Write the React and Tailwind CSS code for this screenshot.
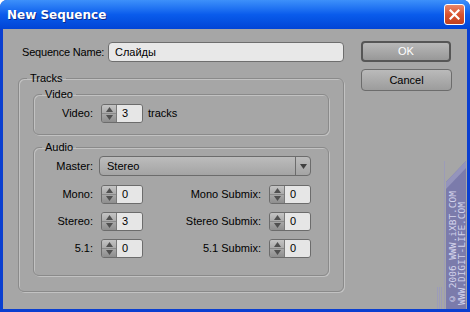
import React from 'react';

const etched = 'border border-[#8a8a8a] rounded-[6px] shadow-[inset_1px_1px_0_#c2c2c2,1px_1px_0_#c2c2c2]';

function Spinner({ value }) {
  return (
    <div className="flex w-[42px] h-[19px] rounded-[3px] border border-[#6c6c6c] overflow-hidden">
      <div className="w-[15px] flex flex-col bg-gradient-to-b from-[#c4c4c4] to-[#8e8e8e] border-r border-[#7a7a7a]">
        <div className="flex-1 flex items-end justify-center pb-[1px] border-b border-[#8a8a8a]">
          <svg width="7" height="5" viewBox="0 0 7 5"><path d="M3.5 0L7 5H0z" fill="#505050" /></svg>
        </div>
        <div className="flex-1 flex items-start justify-center pt-[1px]">
          <svg width="7" height="5" viewBox="0 0 7 5"><path d="M0 0h7L3.5 5z" fill="#505050" /></svg>
        </div>
      </div>
      <div className="flex-1 bg-[#e6e6e6] pl-[5px] flex items-center leading-none">{value}</div>
    </div>
  );
}

function Group({ title, className, children }) {
  return (
    <fieldset className={`${etched} ${className}`}>
      <legend className="ml-[8px] px-[3px] leading-[13px]">{title}</legend>
      {children}
    </fieldset>
  );
}

function Row({ label, value, label2, value2 }) {
  return (
    <div className="flex items-center h-[19px]">
      <span className="w-[59px] text-right">{label}</span>
      <div className="ml-[8px]"><Spinner value={value} /></div>
      <span className="flex-1 text-right whitespace-nowrap">{label2}</span>
      <div className="ml-[8px]"><Spinner value={value2} /></div>
    </div>
  );
}

export default function App() {
  return (
    <div className="w-[470px] h-[312px] flex flex-col bg-[#0a3fd0] rounded-t-[7px] overflow-hidden font-['Liberation_Sans',Arial,sans-serif] text-[11px] text-black">
      {/* title bar */}
      <div className="h-[29px] flex items-center pl-[7px] pr-[5px] bg-gradient-to-b from-[#3d90fa] via-[#0a5cec] to-[#0244d6]">
        <span className="font-['DejaVu_Sans',sans-serif] font-bold text-[12px] text-white [text-shadow:1px_1px_0_#0c2a8a]">New Sequence</span>
        <div className="ml-auto w-[21px] h-[21px] rounded-[3px] border border-white bg-gradient-to-b from-[#e8866a] via-[#d9532f] to-[#c1401e] flex items-center justify-center">
          <svg width="11" height="11" viewBox="0 0 11 11"><path d="M1.5 1.5l8 8M9.5 1.5l-8 8" stroke="#fff" strokeWidth="2.2" strokeLinecap="square" /></svg>
        </div>
      </div>

      {/* body */}
      <div className="relative flex-1 mx-[3px] mb-[3px] bg-[#a6a6a6] flex gap-[17px] px-[15px] pt-[13px]">
        <div className="w-[326px] shrink-0 flex flex-col">
          <div className="flex items-center h-[20px]">
            <span className="pl-[4px] whitespace-nowrap tracking-[-0.2px]">Sequence Name:</span>
            <div className="ml-auto w-[236px] h-[20px] rounded-[4px] border border-[#6e6e6e] bg-[#e8e8e8] pl-[6px] flex items-center">Слайды</div>
          </div>

          <Group title="Tracks" className="mt-[10px]">
            <div className="px-[14px] pt-[3px] pb-[15px]">
              <Group title="Video">
                <div className="flex items-center pt-[3px] pb-[11px] h-[33px]">
                  <span className="w-[59px] text-right">Video:</span>
                  <div className="ml-[8px]"><Spinner value="3" /></div>
                  <span className="ml-[5px]">tracks</span>
                </div>
              </Group>
              <Group title="Audio" className="mt-[6px]">
                <div className="pt-[2px] pb-[17px] pr-[17px] flex flex-col gap-[8px]">
                  <div className="flex items-center h-[20px] mb-[1px]">
                    <span className="w-[59px] text-right">Master:</span>
                    <div className="ml-[6px] flex-1 h-[20px] rounded-[4px] border border-[#6c6c6c] bg-gradient-to-b from-[#bcbcbc] to-[#a4a4a4] flex">
                      <span className="flex-1 pl-[7px] flex items-center">Stereo</span>
                      <div className="w-[15px] border-l border-[#6c6c6c] flex items-center justify-center">
                        <svg width="7" height="5" viewBox="0 0 7 5"><path d="M0 0h7L3.5 5z" fill="#404040" /></svg>
                      </div>
                    </div>
                  </div>
                  <Row label="Mono:" value="0" label2="Mono Submix:" value2="0" />
                  <Row label="Stereo:" value="3" label2="Stereo Submix:" value2="0" />
                  <Row label="5.1:" value="0" label2="5.1 Submix:" value2="0" />
                </div>
              </Group>
            </div>
          </Group>
        </div>

        <div className="w-[91px] shrink-0 flex flex-col">
          <button className="-mt-[1px] h-[21px] w-[90px] rounded-[4px] border-2 border-[#565656] bg-gradient-to-b from-[#b8b8b8] to-[#989898] text-white flex items-center justify-center">OK</button>
          <button className="mt-[7px] h-[22px] w-[91px] rounded-[4px] border border-[#6c6c6c] bg-gradient-to-b from-[#bababa] to-[#9c9c9c] flex items-center justify-center">Cancel</button>
        </div>

        {/* watermark */}
        <svg className="absolute right-0 bottom-0" width="30" height="148" viewBox="0 0 30 148">
          <path d="M9 21L29 0V148H9z" fill="#7b7bab" />
          <path d="M9 21L29 0V7L9 28z" fill="#9494bc" />
          <rect x="7" y="0" width="1" height="148" fill="#9c9cb8" />
          <rect x="0" y="126" width="1" height="22" fill="#9c9cb8" />
          <rect x="2" y="126" width="1" height="22" fill="#9c9cb8" />
          <rect x="4" y="126" width="1" height="22" fill="#9c9cb8" />
        </svg>
        <div className="absolute right-[1px] bottom-[4px] [writing-mode:vertical-rl] rotate-180 font-['DejaVu_Sans_Mono',monospace] text-[9.5px] leading-[8.5px] text-[#d4d4ec]">
          <div>© 2006 WWW.iXBT.COM</div>
          <div>WWW.DIGIT-LIFE.COM</div>
        </div>
      </div>
    </div>
  );
}
